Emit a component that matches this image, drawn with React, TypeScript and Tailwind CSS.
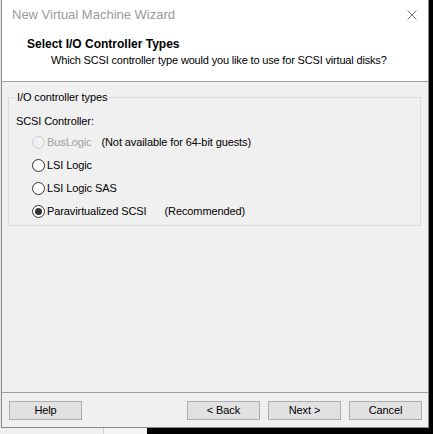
import React from "react";

function Radio({ checked, disabled }: { checked?: boolean; disabled?: boolean }) {
  return (
    <span
      className={
        "flex h-[13px] w-[13px] shrink-0 items-center justify-center rounded-full border " +
        (disabled ? "border-[#cccccc] bg-[#f0f0f0]" : "border-[#333333] bg-white")
      }
    >
      {checked && <span className="h-[7px] w-[7px] rounded-full bg-[#333333]" />}
    </span>
  );
}

export default function App() {
  const font = { fontFamily: '"Liberation Sans", "Noto Sans CJK SC", sans-serif' };
  return (
    <div className="flex h-[434px] w-[433px] flex-col overflow-hidden bg-black text-[11px] tracking-[-0.1px] text-black" style={font}>
      <div className="flex h-[428px] w-[429px]">
        <div className="w-[1px] bg-[#e4e8ee]" />
        <div className="flex w-[428px] flex-col border-x border-b border-[#8a8a8a] bg-[#f0f0f0]">
          {/* header */}
          <div className="h-[82px] border-b border-[#a0a0a0] bg-white">
            <div className="flex h-[30px] items-center justify-between pl-[10px] pr-[10px]">
              <span className="text-[13px] tracking-normal text-[#9a9a9a]">New Virtual Machine Wizard</span>
              <svg width="10" height="10" viewBox="0 0 10 10" className="mr-[1px]">
                <path d="M0.5 0.5 L9.5 9.5 M9.5 0.5 L0.5 9.5" stroke="#7a7a7a" strokeWidth="1" />
              </svg>
            </div>
            <div className="pl-[25px] pt-[6px] text-[12px] font-bold leading-[16px] tracking-normal">Select I/O Controller Types</div>
            <div className="pl-[49px] leading-[16px] tracking-[-0.17px]">Which SCSI controller type would you like to use for SCSI virtual disks?</div>
          </div>
          {/* body */}
          <div className="flex-1 px-[6px] pt-[10px]">
            <div className="relative mt-[5px] h-[129px] w-[413px] border border-[#dcdcdc]">
              <span className="absolute left-[7px] top-[-9px] bg-[#f0f0f0] px-[1px] leading-[16px]">I/O controller types</span>
              <div className="pl-[7px] pt-[15px]">
                <div className="h-[23px] leading-[16px]">SCSI Controller:</div>
                <div className="flex h-[23px] items-start pl-[16px]">
                  <Radio disabled />
                  <span className="ml-[2px] leading-[13px] text-[#a0a0a0]">BusLogic</span>
                  <span className="ml-[10px] leading-[13px]">(Not available for 64-bit guests)</span>
                </div>
                <div className="flex h-[23px] items-start pl-[16px]">
                  <Radio />
                  <span className="ml-[2px] leading-[13px]">LSI Logic</span>
                </div>
                <div className="flex h-[23px] items-start pl-[16px]">
                  <Radio />
                  <span className="ml-[2px] leading-[13px]">LSI Logic SAS</span>
                </div>
                <div className="flex h-[22px] items-start pl-[16px]">
                  <Radio checked />
                  <span className="ml-[2px] leading-[13px]">Paravirtualized SCSI</span>
                  <span className="ml-[18px] leading-[13px]">(Recommended)</span>
                </div>
              </div>
            </div>
          </div>
          {/* footer */}
          <div className="h-[35px] border-t border-[#a0a0a0] pt-[8px]">
            <div className="flex pl-[7px] pr-[6px]">
              <button className="h-[19px] w-[73px] border border-[#adadad] bg-[#e1e1e1] leading-[17px]">Help</button>
              <div className="flex-1" />
              <div className="flex gap-[8px]">
                {["< Back", "Next >", "Cancel"].map((t) => (
                  <button key={t} className="h-[19px] w-[73px] border border-[#adadad] bg-[#e1e1e1] leading-[17px]">{t}</button>
                ))}
              </div>
            </div>
          </div>
        </div>
        <div className="flex-1 bg-[#2b2b2b]" />
      </div>
      <div className="flex h-[6px]">
        <div className="w-[103px] bg-[#f0f0f0]" />
        <div className="w-[1px] bg-[#d0d0d0]" />
        <div className="w-[43px] bg-[#f5f5f5]" />
        <div className="flex-1 bg-black" />
      </div>
    </div>
  );
}
